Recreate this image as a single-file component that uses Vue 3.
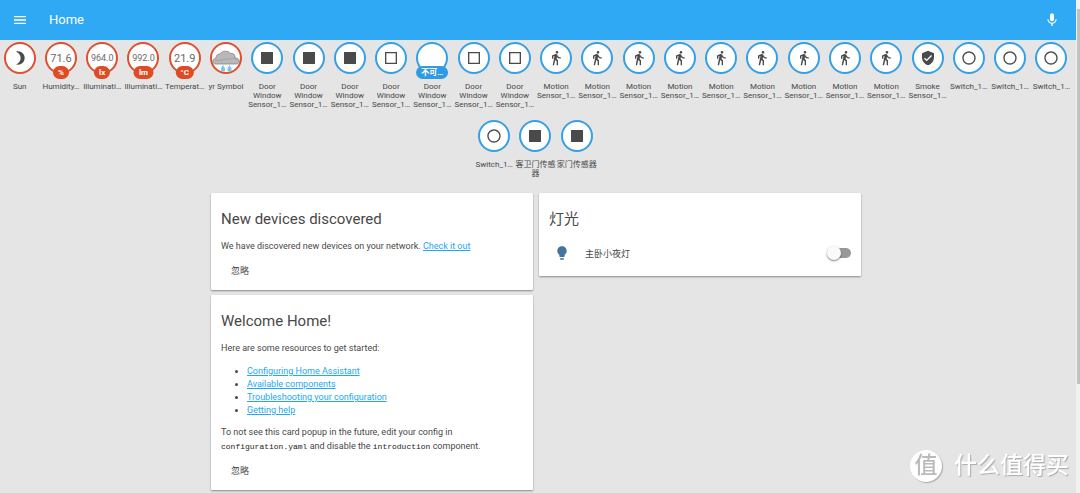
<script setup>
import { ref } from 'vue'

const icons = {
  moon: 'M9 2c-1.050 0-2.050.160-3 .46 4.060 1.270 7 5.060 7 9.540s-2.940 8.270-7 9.540c.95.3 1.950.46 3 .46 5.520 0 10-4.480 10-10S14.520 2 9 2z',
  closed: 'M3 3h18v18H3z',
  open: 'M3 3v18h18V3H3zm2 2h14v14H5V5z',
  walk: 'M13.500 5.500c1.100 0 2-.9 2-2s-.9-2-2-2-2 .9-2 2 .9 2 2 2zM9.800 8.900L7 23h2.100l1.800-8 2.100 2v6h2v-7.500l-2.100-2 .6-3C14.800 12 16.800 13 19 13v-2c-1.900 0-3.500-1-4.300-2.400l-1-1.600c-.4-.6-1-1-1.700-1-.3 0-.5.1-.8.1L6 8.300V13h2V9.600l1.800-.7',
  shield: 'M12 1L3 5v6c0 5.550 3.840 10.740 9 12 5.160-1.260 9-6.450 9-12V5l-9-4zm-2 16l-4-4 1.410-1.410L10 14.170l6.590-6.590L18 9l-8 8z',
  circle: 'M12 2C6.480 2 2 6.480 2 12s4.480 10 10 10 10-4.480 10-10S17.520 2 12 2zm0 18c-4.420 0-8-3.580-8-8s3.580-8 8-8 8 3.580 8 8-3.580 8-8 8z'
}

const door = (icon, tag) => ({ icon, tag, wide: !!tag, label: 'Door Window Sensor_1…' })
const motion = () => ({ icon: 'walk', label: 'Motion Sensor_1…' })
const toggle = () => ({ icon: 'circle', label: 'Switch_1…' })

const badges = [
  { icon: 'moon', red: true, label: 'Sun' },
  { value: '71.6', tag: '%', red: true, label: 'Humidity…' },
  { value: '964.0', tag: 'lx', red: true, small: true, label: 'Illuminati…' },
  { value: '992.0', tag: 'lm', red: true, small: true, label: 'Illuminati…' },
  { value: '21.9', tag: '°C', red: true, label: 'Temperat…' },
  { weather: true, red: true, label: 'yr Symbol' },
  door('closed'), door('closed'), door('closed'), door('open'),
  door(null, '不可…'), door('open'), door('open'),
  ...Array.from({ length: 9 }, motion),
  { icon: 'shield', label: 'Smoke Sensor_1…' },
  toggle(), toggle(), toggle(), toggle(),
  { icon: 'closed', label: '客卫门传感器' },
  { icon: 'closed', label: '家门传感器' }
]

const links = ['Configuring Home Assistant', 'Available components', 'Troubleshooting your configuration', 'Getting help']
const lamp = ref(false)
</script>

<template>
  <div class="page">
    <div class="view">
      <header class="bar">
        <button class="icon-btn" aria-label="Menu">
          <svg viewBox="0 0 24 24"><path d="M3 18h18v-2H3v2zm0-5h18v-2H3v2zm0-7v2h18V6H3z" /></svg>
        </button>
        <h1>Home</h1>
        <button class="icon-btn" aria-label="Voice">
          <svg viewBox="0 0 24 24"><path d="M12 14c1.660 0 2.990-1.340 2.990-3L15 5c0-1.660-1.340-3-3-3S9 3.340 9 5v6c0 1.660 1.340 3 3 3zm5.300-3c0 3-2.540 5.100-5.300 5.100S6.700 14 6.700 11H5c0 3.410 2.720 6.230 6 6.720V21h2v-3.280c3.280-.48 6-3.300 6-6.720h-1.700z" /></svg>
        </button>
      </header>

      <div class="content">
        <section class="badges">
          <div v-for="(b, i) in badges" :key="i" class="badge">
            <div class="disc" :class="{ red: b.red }">
              <svg v-if="b.icon" viewBox="0 0 24 24"><path :d="icons[b.icon]" /></svg>
              <span v-else-if="b.value" class="value" :class="{ small: b.small }">{{ b.value }}</span>
              <svg v-else-if="b.weather" class="weather" viewBox="0 0 28 28">
                <path d="M4 20C1.500 20 .800 18.500.800 17.300c0-1.600 1.300-2.800 3.200-3.200C3.800 11.500 5.800 9.700 8.300 10 9 8 11 7.200 13.500 7.200c2.300 0 4 .8 4.800 2.200 2.500-.5 4.500.8 4.700 3 .1.700 0 1 0 1.600 2.700 0 4.200 1 4.200 3 0 1.800-1.200 3-3.200 3z" fill="#b8b8b8" stroke="#858585" stroke-width="0.800" />
                <path d="M3 17c3-2 5.500.4 8-1.200 2.500-1.700 5 .3 7.300-1 2.500-1.200 4.700-.2 6.700 1.200" fill="none" stroke="#a3a3a3" stroke-width="1" />
                <path d="M11 20.800c-.5 1.800-2.200 2.800-2.200 4.600a2.200 2.200 0 0 0 4.400 0c0-1.800-1.700-2.800-2.200-4.600zM17.500 20.800c-.5 1.800-2.200 2.800-2.200 4.600a2.200 2.200 0 0 0 4.400 0c0-1.800-1.700-2.800-2.200-4.600z" fill="#7cc4e8" />
              </svg>
              <span v-if="b.tag" class="tag" :class="{ wide: b.wide }">{{ b.tag }}</span>
            </div>
            <div class="label">{{ b.label }}</div>
          </div>
        </section>

        <main class="cards">
          <div class="column">
            <article class="card">
              <h2>New devices discovered</h2>
              <p>We have discovered new devices on your network. <a href="#">Check it out</a></p>
              <button class="dismiss">忽略</button>
            </article>
            <article class="card">
              <h2>Welcome Home!</h2>
              <p>Here are some resources to get started:</p>
              <ul>
                <li v-for="l in links" :key="l"><a href="#">{{ l }}</a></li>
              </ul>
              <p>To not see this card popup in the future, edit your config in <code>configuration.yaml</code> and disable the <code>introduction</code> component.</p>
              <button class="dismiss">忽略</button>
            </article>
          </div>
          <div class="column">
            <article class="card">
              <h2>灯光</h2>
              <div class="entity">
                <svg viewBox="0 0 24 24"><path d="M12 2C8.140 2 5 5.140 5 9c0 2.380 1.190 4.470 3 5.740V17c0 .55.450 1 1 1h6c.55 0 1-.45 1-1v-2.260c1.810-1.270 3-3.360 3-5.740 0-3.860-3.140-7-7-7zM9 21c0 .55.450 1 1 1h4c.55 0 1-.45 1-1v-1H9v1z" /></svg>
                <label for="lamp">主卧小夜灯</label>
                <input id="lamp" v-model="lamp" type="checkbox" role="switch" />
              </div>
            </article>
          </div>
        </main>
      </div>
    </div>

    <div class="scroll" aria-hidden="true"><div class="thumb"></div></div>
    <div class="mark"><span class="seal">值</span><span>什么值得买</span></div>
  </div>
</template>

<style>
body {
  background: #e5e5e5;
}
</style>

<style scoped>
.page {
  display: flex;
  min-height: 100vh;
  background: #e5e5e5;
  color: #484848;
  font-family: Roboto, "Noto Sans CJK SC", sans-serif;
  font-size: 9px;
}
.view {
  flex: 1;
  min-width: 0;
}
button {
  border: 0;
  background: none;
  font: inherit;
  color: inherit;
  cursor: pointer;
}
.bar {
  display: flex;
  align-items: center;
  height: 40px;
  padding: 0 16px 0 12px;
  box-sizing: border-box;
  background: #2fa9f3;
  color: #fff;
}
.bar h1 {
  flex: 1;
  margin: 0 0 0 21px;
  font-size: 13px;
  font-weight: 400;
  line-height: 20px;
}
.icon-btn {
  width: 16px;
  height: 16px;
  padding: 0;
}
.icon-btn svg {
  display: block;
  width: 16px;
  height: 16px;
  fill: #fff;
}
.content {
  padding: 2px 4px 4px 0;
}
.badges {
  display: flex;
  flex-wrap: wrap;
  justify-content: center;
  row-gap: 11px;
  margin-left: -1px;
}
.badge {
  width: calc(100% / 26);
}
.disc {
  position: relative;
  display: flex;
  align-items: center;
  justify-content: center;
  box-sizing: border-box;
  width: 32px;
  height: 32px;
  margin: 0 auto;
  border: 2px solid #379fe6;
  border-radius: 50%;
  background: #fff;
}
.disc.red {
  border-color: #df5030;
}
.disc svg {
  width: 16px;
  height: 16px;
  fill: #4a4a4a;
}
.disc .weather {
  flex: none;
  width: 28px;
  height: 28px;
}
.value {
  font-size: 11px;
  color: #6a6a6a;
}
.value.small {
  font-size: 9px;
}
.tag {
  position: absolute;
  bottom: -7px;
  left: 50%;
  transform: translateX(-50%);
  box-sizing: border-box;
  min-width: 16px;
  padding: 0 5px;
  border-radius: 7px;
  background: #df4b25;
  color: #fff;
  font-size: 8px;
  font-weight: 700;
  line-height: 13px;
  text-align: center;
  white-space: nowrap;
}
.tag.wide {
  background: #2f9be3;
}
.label {
  width: 40px;
  min-height: 27px;
  margin: 8px auto 0;
  font-size: 8px;
  line-height: 9px;
  text-align: center;
}
.cards {
  display: grid;
  grid-template-columns: 1fr 1fr;
  gap: 6px;
  max-width: 650px;
  margin: 6px auto 0;
  align-items: start;
}
.column {
  display: grid;
  gap: 5px;
}
.card {
  padding: 16px 10px 9px;
  border-radius: 1px;
  background: #fff;
  box-shadow: 0 1px 2px rgba(0, 0, 0, 0.4);
}
.card h2 {
  margin: 0 0 9px;
  font-size: 15px;
  font-weight: 400;
  line-height: 21px;
}
.card p {
  margin: 0;
  line-height: 14px;
}
.card a {
  color: #22a7f0;
}
.card ul {
  margin: 10px 0 8px;
  padding-left: 26px;
  line-height: 13px;
}
.card code {
  font-family: "Liberation Mono", monospace;
  font-size: 8px;
  line-height: 8px;
  color: #222;
}
.dismiss {
  display: block;
  margin-top: 9px;
  padding: 0 10px;
  line-height: 19px;
}
.entity {
  display: flex;
  align-items: center;
  height: 28px;
}
.entity svg {
  width: 16px;
  height: 16px;
  margin: 0 15px 0 5px;
  fill: #44739e;
}
.entity label {
  flex: 1;
}
.entity input {
  appearance: none;
  position: relative;
  width: 22px;
  height: 10px;
  margin: 0;
  border-radius: 5px;
  background: #999;
}
.entity input::before {
  content: "";
  position: absolute;
  top: -2px;
  left: -2px;
  width: 14px;
  height: 14px;
  border-radius: 50%;
  background: #fafafa;
  box-shadow: 0 1px 2px rgba(0, 0, 0, 0.5);
}
.entity input:checked::before {
  left: 10px;
}
.scroll {
  width: 4px;
  padding-top: 9px;
  box-sizing: border-box;
  background: #f1f1f1;
}
.thumb {
  height: 76vh;
  margin-left: 1px;
  background: #c1c1c1;
}
.mark {
  position: fixed;
  right: 11px;
  bottom: 11px;
  display: flex;
  align-items: center;
  gap: 12px;
  color: #fff;
  font-size: 23px;
  font-weight: 500;
  line-height: 32px;
  text-shadow: 1px 1px 1px #aaa;
}
.seal {
  width: 32px;
  height: 32px;
  border-radius: 50%;
  background: #fff;
  box-shadow: 1px 1px 1px #aaa;
  color: #bbb;
  text-align: center;
  text-shadow: none;
}
</style>
